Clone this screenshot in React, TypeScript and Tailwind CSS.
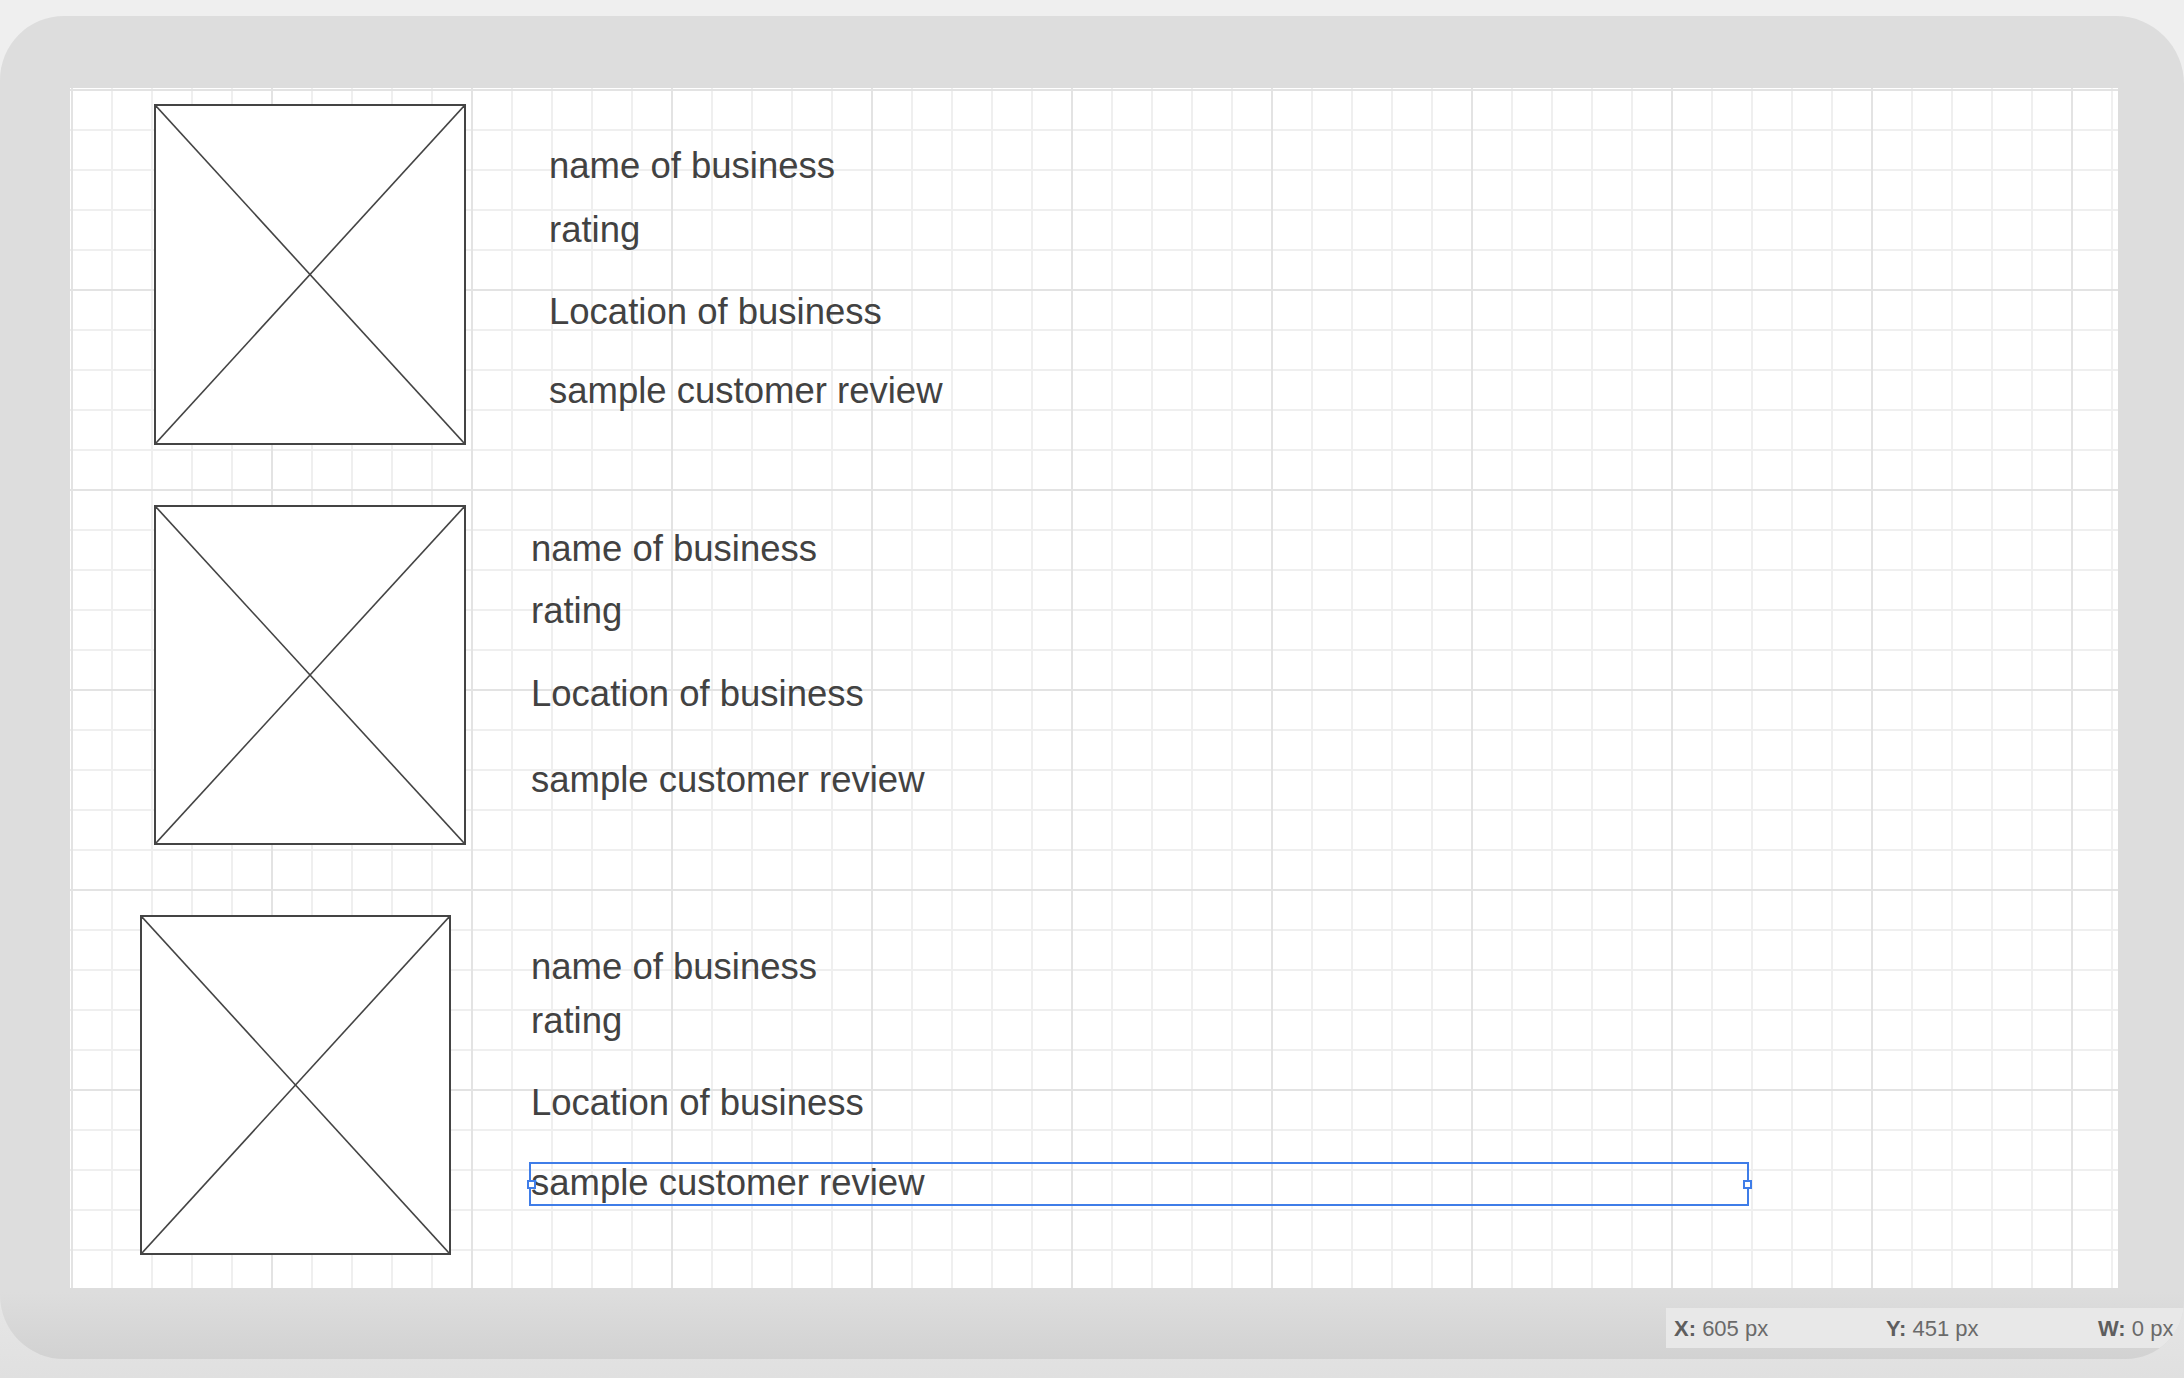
import React from "react";

type Line = { text: string; mt: number };

const rows: {
  mt: number;
  pl: number;
  boxW: number;
  boxH: number;
  gap: number;
  pt: number;
  lines: Line[];
  selectedLast?: boolean;
}[] = [
  {
    mt: 16,
    pl: 84,
    boxW: 312,
    boxH: 341,
    gap: 83,
    pt: 41,
    lines: [
      { text: "name of business", mt: 0 },
      { text: "rating", mt: 22 },
      { text: "Location of business", mt: 40 },
      { text: "sample customer review", mt: 37 },
    ],
  },
  {
    mt: 60,
    pl: 84,
    boxW: 312,
    boxH: 340,
    gap: 65,
    pt: 23,
    lines: [
      { text: "name of business", mt: 0 },
      { text: "rating", mt: 20 },
      { text: "Location of business", mt: 41 },
      { text: "sample customer review", mt: 44 },
    ],
  },
  {
    mt: 70,
    pl: 70,
    boxW: 311,
    boxH: 340,
    gap: 80,
    pt: 31,
    lines: [
      { text: "name of business", mt: 0 },
      { text: "rating", mt: 12 },
      { text: "Location of business", mt: 40 },
      { text: "sample customer review", mt: 38 },
    ],
    selectedLast: true,
  },
];

function Placeholder({ w, h }: { w: number; h: number }) {
  return (
    <div
      className="relative shrink-0 border-2 border-[#444444] bg-white"
      style={{ width: w, height: h }}
    >
      <svg
        className="absolute inset-0 h-full w-full"
        viewBox="0 0 100 100"
        preserveAspectRatio="none"
      >
        <line x1="0" y1="0" x2="100" y2="100" stroke="#444444" strokeWidth="1.6" vectorEffect="non-scaling-stroke" />
        <line x1="100" y1="0" x2="0" y2="100" stroke="#444444" strokeWidth="1.6" vectorEffect="non-scaling-stroke" />
      </svg>
    </div>
  );
}

function StatusItem({ label, value, last }: { label: string; value: string; last?: boolean }) {
  return (
    <div className={last ? "whitespace-nowrap" : "w-[212px] shrink-0 whitespace-nowrap"}>
      <span className="font-bold text-[#5e5e5e]">{label}</span> {value}
    </div>
  );
}

export default function App() {
  return (
    <div className="h-[1378px] w-[2184px] overflow-hidden bg-[linear-gradient(to_bottom,#efefef_86%,#e0e0e0)] pt-[16px] font-['Liberation_Sans',Arial,sans-serif]">
      <div className="flex h-[1343px] w-[2184px] flex-col overflow-hidden rounded-tl-[64px] rounded-bl-[64px] rounded-tr-[68px] rounded-br-[58px] bg-[linear-gradient(to_bottom,#dddddd_95%,#d2d2d2)] pl-[70px] pt-[72px]">
        <div className="flex h-[1200px] w-[2048px] shrink-0 flex-col bg-white bg-[image:linear-gradient(to_right,#e3e3e3_2px,transparent_2px),linear-gradient(to_bottom,#e3e3e3_2px,transparent_2px),linear-gradient(to_right,#efefef_2px,transparent_2px),linear-gradient(to_bottom,#efefef_2px,transparent_2px)] bg-size-[200px_200px,200px_200px,40px_40px,40px_40px] bg-position-[1px_1px]">
          {rows.map((row, i) => (
            <div
              key={i}
              className="flex items-start"
              style={{ marginTop: row.mt, paddingLeft: row.pl }}
            >
              <Placeholder w={row.boxW} h={row.boxH} />
              <div
                className="flex flex-col text-[36.5px] leading-[42px] text-[#424242]"
                style={{ marginLeft: row.gap, paddingTop: row.pt }}
              >
                {row.lines.map((line, j) => {
                  const selected = row.selectedLast && j === row.lines.length - 1;
                  if (selected) {
                    return (
                      <div
                        key={j}
                        className="relative -ml-[2px] h-[44px] w-[1220px] whitespace-nowrap border-2 border-[#3f7de8] leading-[38px]"
                        style={{ marginTop: line.mt }}
                      >
                        {line.text}
                        <span className="absolute left-[-4px] top-[16px] h-[9px] w-[9px] border-2 border-[#3f7de8] bg-white" />
                        <span className="absolute right-[-5px] top-[16px] h-[9px] w-[9px] border-2 border-[#3f7de8] bg-white" />
                      </div>
                    );
                  }
                  return (
                    <div key={j} className="whitespace-nowrap" style={{ marginTop: line.mt }}>
                      {line.text}
                    </div>
                  );
                })}
              </div>
            </div>
          ))}
        </div>
        <div className="ml-[1596px] mt-[20px] flex h-[40px] w-[518px] shrink-0 items-center bg-[#e8e8e8] pl-[8px] text-[22px] text-[#6a6a6a]">
          <StatusItem label="X:" value="605 px" />
          <StatusItem label="Y:" value="451 px" />
          <StatusItem label="W:" value="0 px" last />
        </div>
      </div>
    </div>
  );
}
